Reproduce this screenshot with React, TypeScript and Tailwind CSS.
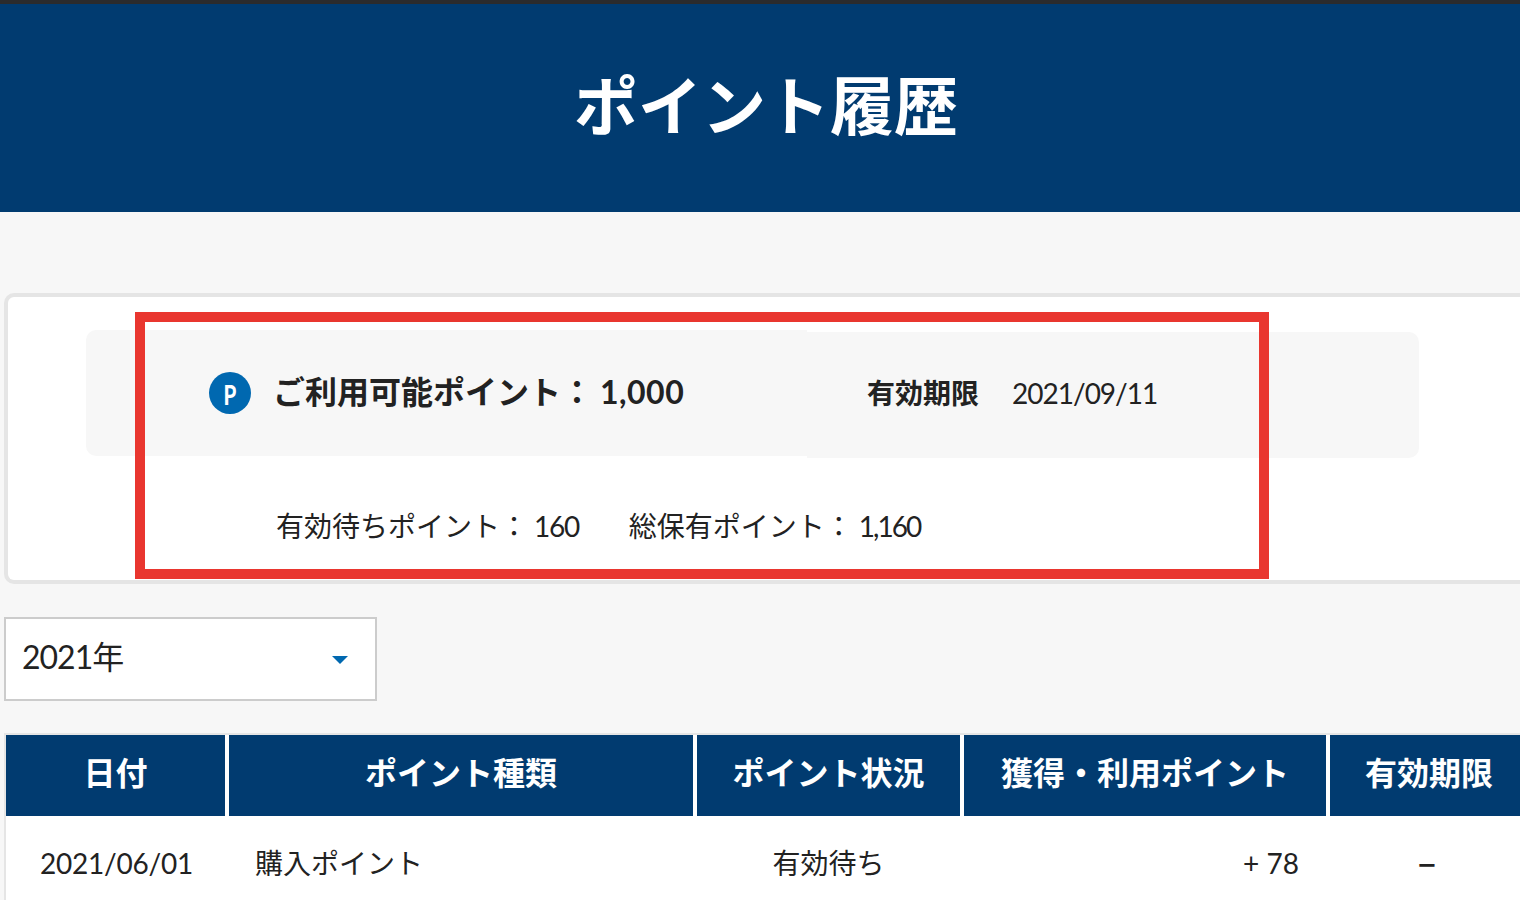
// App.tsx

const columns = [
  { label: "日付", width: "w-[219px]" },
  { label: "ポイント種類", width: "w-[464px]" },
  { label: "ポイント状況", width: "w-[263px]" },
  { label: "獲得・利用ポイント", width: "w-[362px]" },
  { label: "有効期限", width: "w-[198px]" },
]

const App = () => {
  return (
    <div className="w-[1520px] h-[900px] overflow-hidden bg-[#f7f7f7] text-[#222222] font-['Lato','Noto_Sans_CJK_JP',sans-serif]">
      {/* Header */}
      <div className="h-[4px] bg-[#2b2b2d]"></div>
      <header className="h-[208px] bg-[#013b70] flex items-center justify-center">
        <h1 className="text-[64px] leading-none font-bold text-white ml-[12px] mb-[12px] font-['Noto_Sans_CJK_JP',sans-serif]">ポイント履歴</h1>
      </header>

      {/* Summary card */}
      <section className="relative mt-[81px] ml-[4px] h-[291px] bg-white border-[4px] border-r-0 border-[#e5e5e5] rounded-l-[10px]">
        <div className="flex ml-[78px] mt-[33px] w-[1333px]">
          <div className="flex items-center w-[721px] h-[126px] pl-[123px] bg-[#f7f7f7] rounded-l-[10px]">
            <div className="w-[42px] h-[42px] rounded-full bg-[#0068b0] flex items-center justify-center text-white text-[27px] font-bold leading-none font-['Noto_Sans_CJK_JP',sans-serif]">
              <span className="inline-block scale-x-75">P</span>
            </div>
            <div className="ml-[22px] text-[32px] leading-none font-bold whitespace-nowrap mt-[-2px]">
              <span>ご利用可能ポイント：</span>
              <span className="ml-[7px] tracking-[0.5px]">1,000</span>
            </div>
          </div>
          <div className="flex items-center w-[612px] h-[126px] mt-[2px] pl-[60px] bg-[#f7f7f7] rounded-r-[10px] text-[28px] leading-none whitespace-nowrap">
            <span className="font-bold mt-[-4px]">有効期限</span>
            <span className="ml-[33px] mt-[-4px] tracking-[-1px]">2021/09/11</span>
          </div>
        </div>
        <div className="flex ml-[268px] mt-[54px] text-[28px] leading-none whitespace-nowrap">
          <span>有効待ちポイント：</span>
          <span className="ml-[6px] tracking-[-1.3px]">160</span>
          <span className="ml-[50px]">総保有ポイント：</span>
          <span className="ml-[6px] tracking-[-2px]">1,160</span>
        </div>

        {/* Red annotation frame */}
        <div className="absolute left-[127px] top-[15px] w-[1134px] h-[267px] border-[10px] border-[#e9362f]"></div>
      </section>

      {/* Year select */}
      <div className="mt-[33px] ml-[4px] w-[373px] h-[84px] bg-white border-2 border-[#cccccc] flex items-center justify-between pl-[16px] pr-[27px]">
        <span className="text-[32px] leading-none mt-[-4px]">
          <span className="tracking-[-1px]">2021</span>年
        </span>
        <svg width="16" height="8" viewBox="0 0 16 8" className="mt-[2px]">
          <path d="M0 0H16L8 8Z" fill="#0068b0" />
        </svg>
      </div>

      {/* History table */}
      <div className="mt-[32px] ml-[4px] w-[1530px] border-t-2 border-l-2 border-[#e5e5e5] bg-white">
        <div className="flex gap-[4px]">
          {columns.map((col) => (
            <div
              key={col.label}
              className={`${col.width} shrink-0 h-[81px] bg-[#013b70] text-white text-[32px] font-bold flex items-center justify-center whitespace-nowrap leading-none pb-[6px]`}
            >
              {col.label}
            </div>
          ))}
        </div>
        <div className="flex gap-[4px] h-[100px] text-[28px] leading-none whitespace-nowrap pt-[33px]">
          <div className="w-[219px] text-center tracking-[-0.2px] pl-[2px]">2021/06/01</div>
          <div className="w-[464px] pl-[26px]">購入ポイント</div>
          <div className="w-[263px] text-center">有効待ち</div>
          <div className="w-[362px] text-right pr-[27px]">+ 78</div>
          <div className="w-[198px] text-center text-[34px] font-medium font-['Noto_Sans_CJK_JP',sans-serif] leading-[24px] pr-[4px]">–</div>
        </div>
      </div>
    </div>
  )
}

export default App
